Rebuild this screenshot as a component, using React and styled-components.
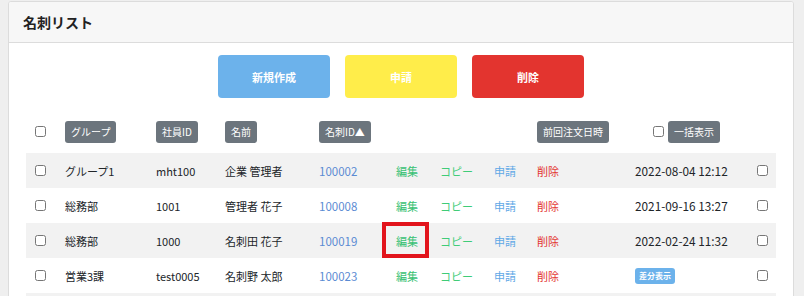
import React from "react"
import styled, { createGlobalStyle } from "styled-components"

const GlobalStyle = createGlobalStyle`
  html, body {
    margin: 0;
    padding: 0;
    background: #efefef;
  }
  body {
    padding: 1px 10px 0 8px;
    font-family: "Noto Sans", "Noto Sans CJK JP", sans-serif;
    color: #212529;
  }
`

const Card = styled.div`
  background: #fff;
  border: 1px solid #dcdcdc;
  border-radius: 3px;
  overflow: hidden;
`
const CardHeader = styled.div`
  height: 40px;
  display: flex;
  align-items: center;
  padding-left: 14px;
  background: #f7f7f7;
  border-bottom: 1px solid #dcdcdc;
  font-family: "Noto Sans CJK JP", sans-serif;
  font-size: 14px;
  font-weight: 700;
  color: #222;
`
const CardBody = styled.div`
  padding: 12px 17px 0 17px;
`
const ButtonBar = styled.div`
  display: flex;
  justify-content: center;
  gap: 15px;
`
const ActionButton = styled.button`
  width: 112px;
  height: 43px;
  border: none;
  border-radius: 4px;
  background: ${(p) => p.$color};
  color: #fff;
  font-family: "Noto Sans CJK JP", sans-serif;
  font-size: 11px;
  font-weight: 700;
`
const Table = styled.div`
  margin-top: 12px;
`
const Row = styled.div`
  display: grid;
  grid-template-columns: 39px 91px 69px 94px 77px 44px 54px 43px 98px 122px 19px;
  height: ${(p) => (p.$head ? "43px" : "35px")};
  background: ${(p) => (p.$striped ? "#f2f2f2" : "transparent")};
  font-family: "Noto Sans CJK JP", sans-serif;
  font-size: 11px;
`
const Cell = styled.div`
  position: relative;
  display: flex;
  align-items: center;
  gap: 4px;
  padding-left: ${(p) => p.$pad || 0}px;
  color: ${(p) => p.$color || "#212529"};
  font-size: ${(p) => p.$size || 11}px;
  white-space: nowrap;
`
const Check = styled.input.attrs({ type: "checkbox" })`
  width: 11px;
  height: 11px;
  margin: 0;
`
const HeadBadge = styled.span`
  display: inline-flex;
  align-items: center;
  height: 22px;
  padding: 0 6px;
  border-radius: 3px;
  background: #6c757d;
  color: #fff;
  font-size: 10px;
`
const DiffBadge = styled.span`
  display: inline-flex;
  align-items: center;
  height: 16px;
  padding: 0 4px;
  border-radius: 3px;
  background: #6cb2eb;
  color: #fff;
  font-size: 8px;
  font-weight: 700;
`
const Highlight = styled.div`
  position: absolute;
  top: -1px;
  left: -14px;
  width: 47px;
  height: 36px;
  box-sizing: border-box;
  border: 4px solid #e2141c;
`

const rows = [
  { group: "グループ1", emp: "mht100", name: "企業 管理者", id: "100002", date: "2022-08-04 12:12" },
  { group: "総務部", emp: "1001", name: "管理者 花子", id: "100008", date: "2021-09-16 13:27" },
  { group: "総務部", emp: "1000", name: "名刺田 花子", id: "100019", date: "2022-02-24 11:32", mark: true },
  { group: "営業3課", emp: "test0005", name: "名刺野 太郎", id: "100023", diff: true },
]

export default function App() {
  return (
    <>
      <GlobalStyle />
      <Card>
        <CardHeader>名刺リスト</CardHeader>
        <CardBody>
          <ButtonBar>
            <ActionButton $color="#6cb2eb">新規作成</ActionButton>
            <ActionButton $color="#ffed4a">申請</ActionButton>
            <ActionButton $color="#e3342f">削除</ActionButton>
          </ButtonBar>
          <Table>
            <Row $head>
              <Cell $pad={9}><Check /></Cell>
              <Cell><HeadBadge>グループ</HeadBadge></Cell>
              <Cell><HeadBadge>社員ID</HeadBadge></Cell>
              <Cell><HeadBadge>名前</HeadBadge></Cell>
              <Cell><HeadBadge>名刺ID▲</HeadBadge></Cell>
              <Cell />
              <Cell />
              <Cell />
              <Cell><HeadBadge>前回注文日時</HeadBadge></Cell>
              <Cell $pad={18}><Check /><HeadBadge>一括表示</HeadBadge></Cell>
              <Cell />
            </Row>
            {rows.map((r, i) => (
              <Row key={r.id} $striped={i % 2 === 0}>
                <Cell $pad={9}><Check /></Cell>
                <Cell>{r.group}</Cell>
                <Cell $size={11}>{r.emp}</Cell>
                <Cell>{r.name}</Cell>
                <Cell $color="#5b8bd3" $size={11.5}>{r.id}</Cell>
                <Cell $color="#38c172">
                  編集
                  {r.mark && <Highlight />}
                </Cell>
                <Cell $color="#3fcc78">コピー</Cell>
                <Cell $color="#5fa8e6">申請</Cell>
                <Cell $color="#e3342f">削除</Cell>
                <Cell $size={11.8}>{r.diff ? <DiffBadge>差分表示</DiffBadge> : r.date}</Cell>
                <Cell><Check /></Cell>
              </Row>
            ))}
            <Row $striped />
          </Table>
        </CardBody>
      </Card>
    </>
  )
}
